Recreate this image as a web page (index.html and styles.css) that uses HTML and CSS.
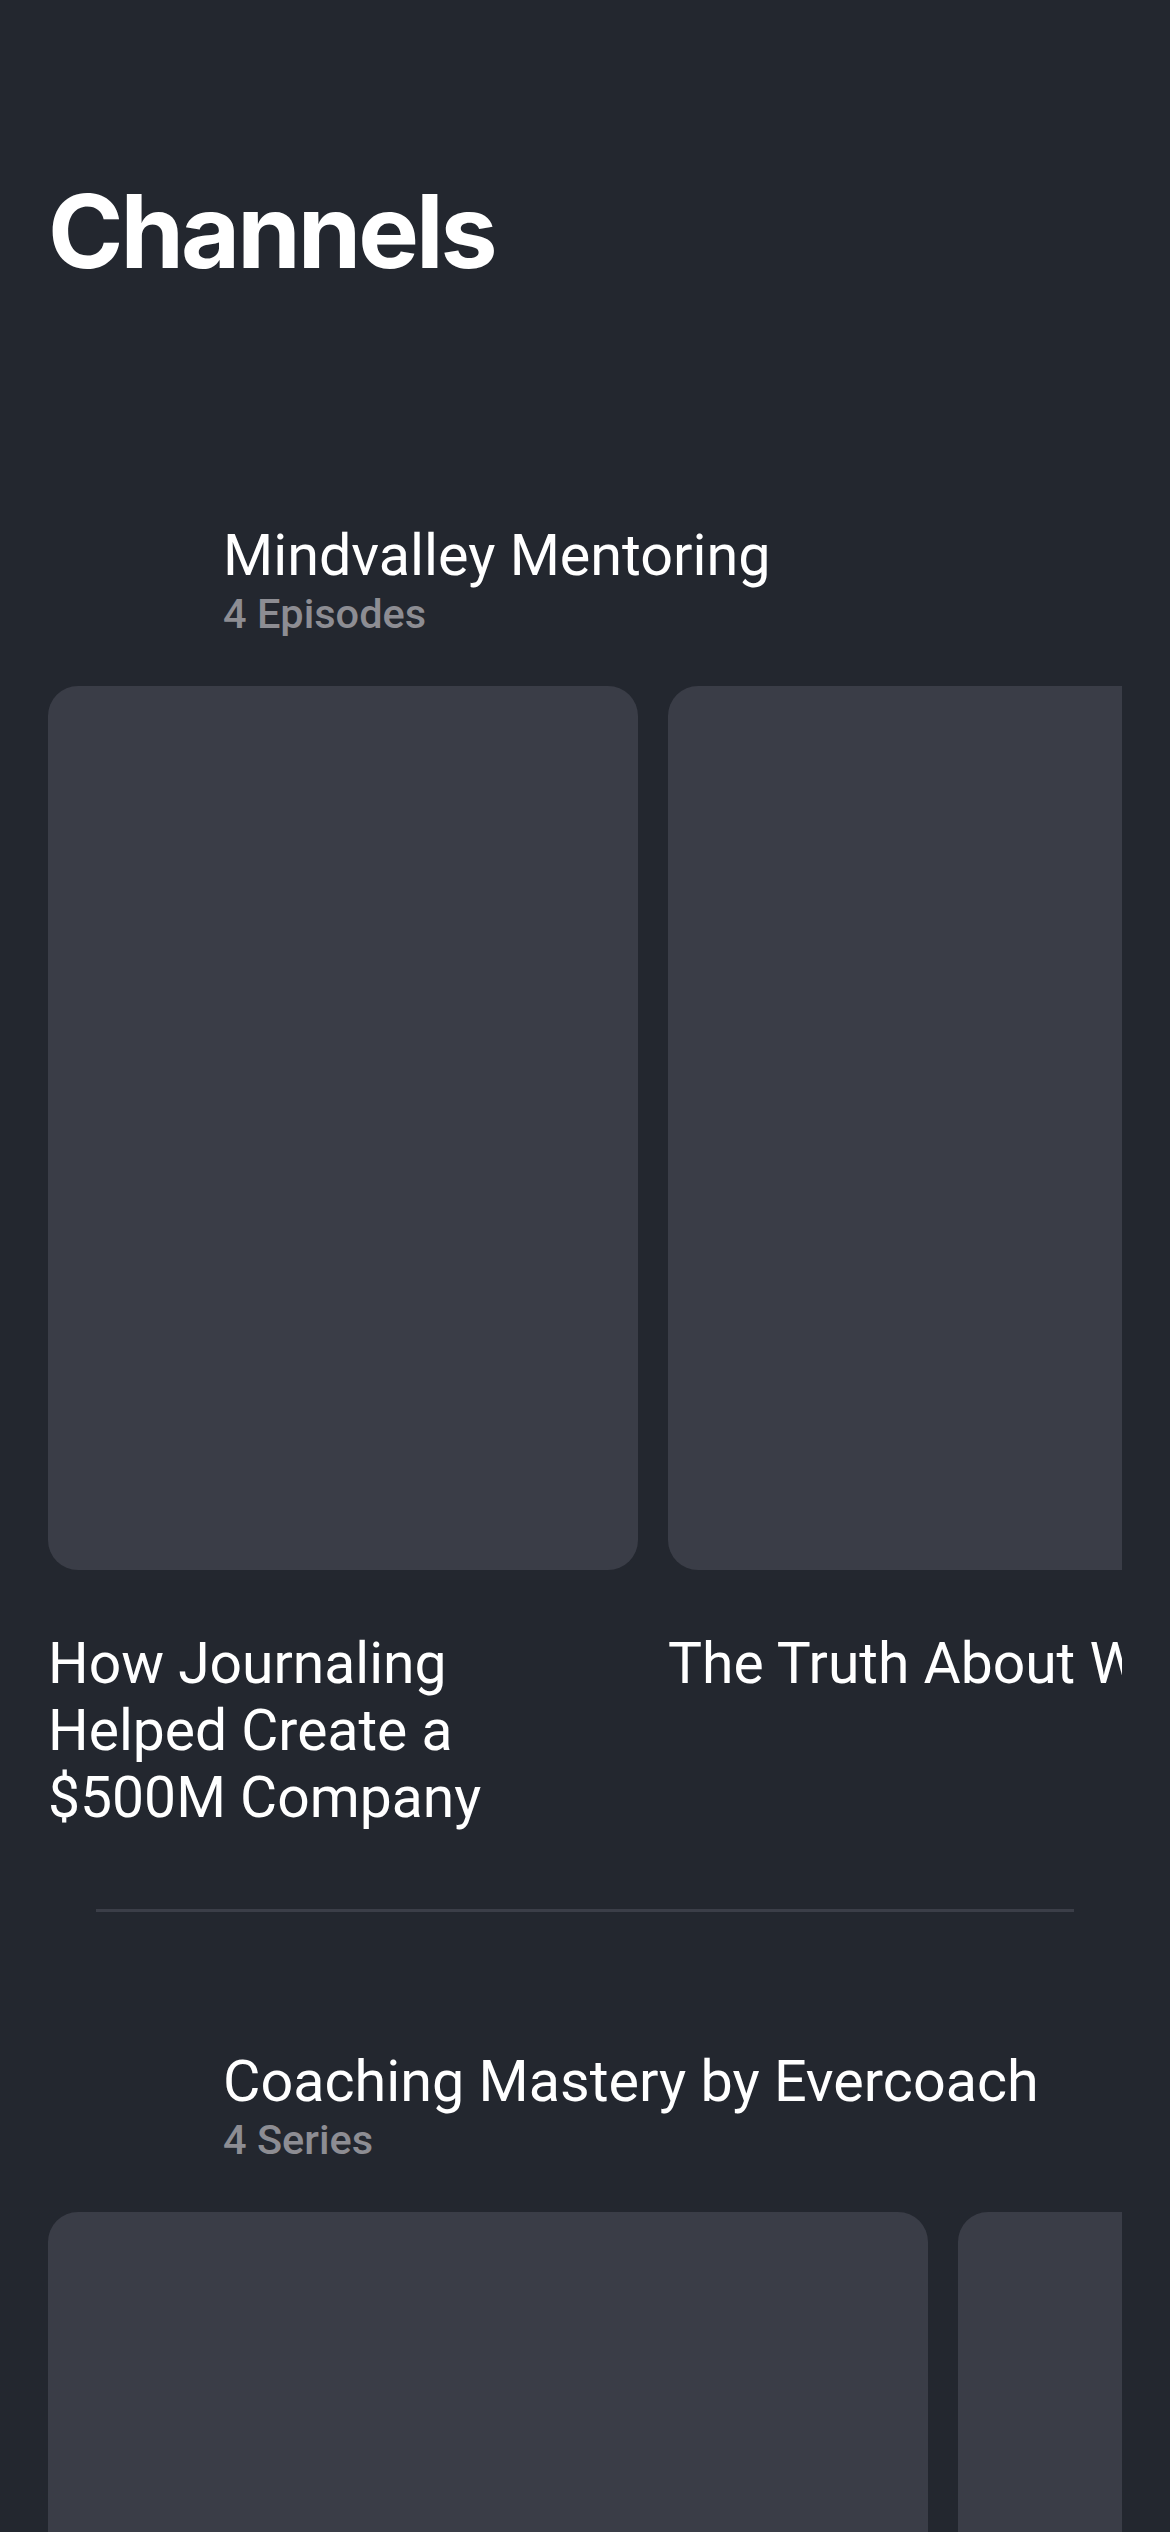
FILE: index.html
```html
<!DOCTYPE html>
<html lang="en">
<head>
<meta charset="utf-8">
<title>Channels</title>
<link rel="stylesheet" href="styles.css">
</head>
<body>
<main class="page">
  <h1 class="page-title">Channels</h1>

  <section class="channel channel--first">
    <header class="channel-head">
      <div class="avatar"></div>
      <div class="channel-meta">
        <h2 class="channel-name">Mindvalley Mentoring</h2>
        <p class="channel-count">4 Episodes</p>
      </div>
    </header>
    <div class="rail">
      <article class="item">
        <div class="thumb"></div>
        <h3 class="item-title">How Journaling Helped Create a $500M Company</h3>
      </article>
      <article class="item">
        <div class="thumb"></div>
        <h3 class="item-title">The Truth About Work</h3>
      </article>
    </div>
  </section>

  <hr class="divider">

  <section class="channel channel--next">
    <header class="channel-head">
      <div class="avatar"></div>
      <div class="channel-meta">
        <h2 class="channel-name">Coaching Mastery by Evercoach</h2>
        <p class="channel-count">4 Series</p>
      </div>
    </header>
    <div class="rail">
      <article class="item item--wide">
        <div class="thumb thumb--wide"></div>
      </article>
      <article class="item item--wide">
        <div class="thumb thumb--wide"></div>
      </article>
    </div>
  </section>
</main>
</body>
</html>
```

FILE: styles.css
```css
html, body {
  margin: 0;
  padding: 0;
  background: #23272f;
}

.page {
  width: 1170px;
  height: 2532px;
  overflow: hidden;
  box-sizing: border-box;
  padding-top: 170px;
  background: #23272f;
  font-family: Roboto, "Liberation Sans", sans-serif;
  color: #ffffff;
}

.page-title {
  margin: 0 48px;
  font-family: Inter, "Liberation Sans", sans-serif;
  font-weight: 700;
  font-size: 102px;
  line-height: 122px;
  letter-spacing: -3px;
  color: #ffffff;
}

.channel--first {
  margin-top: 229px;
}

.channel--next {
  margin-top: 135px;
}

.channel-head {
  display: flex;
  align-items: flex-start;
  gap: 36px;
  margin: 0 48px;
}

.avatar {
  flex: 0 0 139px;
  height: 118px;
}

.channel-meta {
  display: flex;
  flex-direction: column;
}

.channel-name {
  margin: 0;
  font-weight: 400;
  font-size: 57.5px;
  line-height: 70px;
  color: #ffffff;
}

.channel-count {
  margin: 0;
  font-weight: 500;
  font-size: 41.5px;
  line-height: 46px;
  color: #8d8d93;
}

.rail {
  display: flex;
  gap: 30px;
  margin: 47px 48px 0;
  overflow: hidden;
}

.item {
  flex: 0 0 590px;
}

.item--wide {
  flex-basis: 880px;
}

.thumb {
  height: 884px;
  border-radius: 30px;
  background: #3a3d47;
}

.thumb--wide {
  height: 600px;
}

.item-title {
  margin: 60px 0 0;
  font-weight: 400;
  font-size: 57px;
  line-height: 67px;
  color: #ffffff;
}

.divider {
  margin: 78px 96px 0;
  height: 3px;
  border: 0;
  background: #3b3e48;
}
```
